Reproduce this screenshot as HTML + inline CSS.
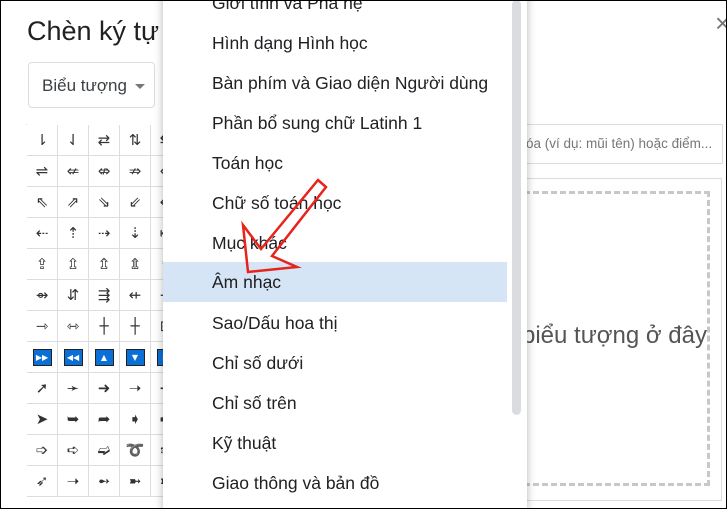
<!DOCTYPE html>
<html><head><meta charset="utf-8"><style>
*{margin:0;padding:0;box-sizing:border-box}
html{width:727px;height:509px;overflow:hidden}
body{width:727px;height:509px;overflow:hidden;background:#fff;font-family:"Liberation Sans",Arial,sans-serif;position:relative}
.frame{position:absolute;left:0;top:0;width:727px;height:509px;border:1px solid #000;z-index:50;pointer-events:none}
.title{position:absolute;left:27px;top:16px;font-size:27px;color:#202124}
.btn{position:absolute;left:28px;top:62px;width:127px;height:46px;border:1px solid #dadce0;border-radius:4px;font-size:17px;color:#3c4043;padding:13px 0 0 13px}
.btn:after{content:"";position:absolute;right:9px;top:21px;border-left:5px solid transparent;border-right:5px solid transparent;border-top:5px solid #777}
.grid{position:absolute;left:26px;top:124px;border-top:1px solid #ddd;border-left:1px solid #ddd}
.grid div{position:absolute;width:31px;height:31px;border-right:1px solid #ddd;border-bottom:1px solid #ddd;text-align:center;line-height:30px;font-family:"DejaVu Sans",sans-serif;font-size:15px;color:#333}
.blue{display:inline-block;width:19px;height:17px;background:#0a6fd6;border:1px solid #222;color:#fff;font-size:8px;line-height:15px;vertical-align:middle}
.search{position:absolute;left:490px;top:124px;width:233px;height:40px;border:1px solid #dadce0;font-size:13.5px;color:#777;padding:11px 0 0 36px;border-left:none;white-space:nowrap;overflow:hidden}
.drop{position:absolute;left:470px;top:178px;width:252px;height:323px;border:1px solid #dadce0}
.dash{position:absolute;left:470px;top:191px;width:240px;height:295px;border:3px dashed #c8c8c8;border-left:none}
.droptxt{position:absolute;left:522px;top:322px;font-size:24px;color:#555;white-space:nowrap}
.close{position:absolute;left:715px;top:8px;font-size:26px;color:#777}
.menu{position:absolute;left:163px;top:-10px;width:364px;height:519px;background:#fff;box-shadow:0 2px 8px rgba(0,0,0,.3);z-index:10}
.item{position:absolute;left:0;width:344px;height:40px;font-size:17.5px;color:#202124;padding-left:49px;line-height:40px;white-space:nowrap}
.hl{background:#d5e5f6}
.sb{position:absolute;left:349px;top:0;width:9px;height:415px;background:#dadce0;border-radius:5px}
svg{position:absolute;left:0;top:0;z-index:20}
</style></head><body>
<div class="frame"></div>
<div class="title">Chèn ký tự</div>
<div class="btn">Biểu tượng</div>
<div class="grid">
<div style="left:0;top:0">⇂</div><div style="left:31px;top:0">⇃</div><div style="left:62px;top:0">⇄</div><div style="left:93px;top:0">⇅</div><div style="left:124px;top:0">⇆</div>
<div style="left:0;top:31px">⇌</div><div style="left:31px;top:31px">⇍</div><div style="left:62px;top:31px">⇎</div><div style="left:93px;top:31px">⇏</div><div style="left:124px;top:31px">⇐</div>
<div style="left:0;top:62px">⇖</div><div style="left:31px;top:62px">⇗</div><div style="left:62px;top:62px">⇘</div><div style="left:93px;top:62px">⇙</div><div style="left:124px;top:62px">⇚</div>
<div style="left:0;top:93px">⇠</div><div style="left:31px;top:93px">⇡</div><div style="left:62px;top:93px">⇢</div><div style="left:93px;top:93px">⇣</div><div style="left:124px;top:93px">⇤</div>
<div style="left:0;top:124px">⇪</div><div style="left:31px;top:124px">⇫</div><div style="left:62px;top:124px">⇬</div><div style="left:93px;top:124px">⇭</div><div style="left:124px;top:124px">⇮</div>
<div style="left:0;top:155px">⇴</div><div style="left:31px;top:155px">⇵</div><div style="left:62px;top:155px">⇶</div><div style="left:93px;top:155px">⇷</div><div style="left:124px;top:155px">⇸</div>
<div style="left:0;top:186px">⇾</div><div style="left:31px;top:186px">⇿</div><div style="left:62px;top:186px">┼</div><div style="left:93px;top:186px">┼</div><div style="left:124px;top:186px">⊟</div>
<div style="left:0;top:217px"><span class="blue">▶▶</span></div><div style="left:31px;top:217px"><span class="blue">◀◀</span></div><div style="left:62px;top:217px"><span class="blue">▲</span></div><div style="left:93px;top:217px"><span class="blue">▼</span></div><div style="left:124px;top:217px"><span class="blue">▶</span></div>
<div style="left:0;top:248px">➚</div><div style="left:31px;top:248px">➛</div><div style="left:62px;top:248px">➜</div><div style="left:93px;top:248px">➝</div><div style="left:124px;top:248px">➞</div>
<div style="left:0;top:279px">➤</div><div style="left:31px;top:279px">➥</div><div style="left:62px;top:279px">➦</div><div style="left:93px;top:279px">➧</div><div style="left:124px;top:279px">➨</div>
<div style="left:0;top:310px">➩</div><div style="left:31px;top:310px">➪</div><div style="left:62px;top:310px">➫</div><div style="left:93px;top:310px">➰</div><div style="left:124px;top:310px">➱</div>
<div style="left:0;top:341px">➶</div><div style="left:31px;top:341px">➝</div><div style="left:62px;top:341px">➻</div><div style="left:93px;top:341px">➼</div><div style="left:124px;top:341px">➽</div>
</div>
<div class="search">óa (ví dụ: mũi tên) hoặc điểm...</div>
<div class="drop"></div>
<div class="dash"></div>
<div class="droptxt">biểu tượng ở đây</div>
<div class="close">×</div>
<div class="menu">
<div class="item" style="top:-7px">Giới tính và Phả hệ</div>
<div class="item" style="top:33px">Hình dạng Hình học</div>
<div class="item" style="top:73px">Bàn phím và Giao diện Người dùng</div>
<div class="item" style="top:113px">Phần bổ sung chữ Latinh 1</div>
<div class="item" style="top:153px">Toán học</div>
<div class="item" style="top:193px">Chữ số toán học</div>
<div class="item" style="top:233px">Mục khác</div>
<div class="item hl" style="top:272px">Âm nhạc</div>
<div class="item" style="top:313px">Sao/Dấu hoa thị</div>
<div class="item" style="top:353px">Chỉ số dưới</div>
<div class="item" style="top:393px">Chỉ số trên</div>
<div class="item" style="top:433px">Kỹ thuật</div>
<div class="item" style="top:473px">Giao thông và bản đồ</div>
<div class="sb" style="top:10px"></div>
</div>
<svg width="727" height="509"><polygon points="318,180 326,187 272,256 297,267 248,272 243,225 261,249" fill="none" stroke="#e8231b" stroke-width="2.5" stroke-linejoin="miter"/></svg>
</body></html>
